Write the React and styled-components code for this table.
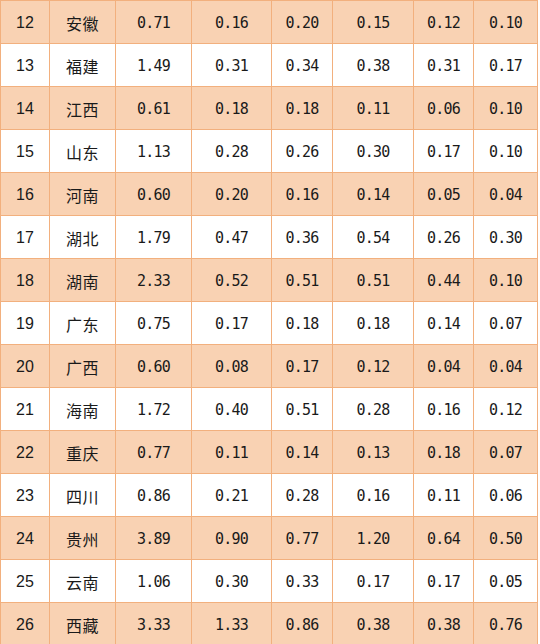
import React from "react"
import styled, { createGlobalStyle } from "styled-components"

const GlobalStyle = createGlobalStyle`
  html, body {
    margin: 0;
    padding: 0;
    background: #ffffff;
  }
`

const rows = [
  ["12", "安徽", "0.71", "0.16", "0.20", "0.15", "0.12", "0.10"],
  ["13", "福建", "1.49", "0.31", "0.34", "0.38", "0.31", "0.17"],
  ["14", "江西", "0.61", "0.18", "0.18", "0.11", "0.06", "0.10"],
  ["15", "山东", "1.13", "0.28", "0.26", "0.30", "0.17", "0.10"],
  ["16", "河南", "0.60", "0.20", "0.16", "0.14", "0.05", "0.04"],
  ["17", "湖北", "1.79", "0.47", "0.36", "0.54", "0.26", "0.30"],
  ["18", "湖南", "2.33", "0.52", "0.51", "0.51", "0.44", "0.10"],
  ["19", "广东", "0.75", "0.17", "0.18", "0.18", "0.14", "0.07"],
  ["20", "广西", "0.60", "0.08", "0.17", "0.12", "0.04", "0.04"],
  ["21", "海南", "1.72", "0.40", "0.51", "0.28", "0.16", "0.12"],
  ["22", "重庆", "0.77", "0.11", "0.14", "0.13", "0.18", "0.07"],
  ["23", "四川", "0.86", "0.21", "0.28", "0.16", "0.11", "0.06"],
  ["24", "贵州", "3.89", "0.90", "0.77", "1.20", "0.64", "0.50"],
  ["25", "云南", "1.06", "0.30", "0.33", "0.17", "0.17", "0.05"],
  ["26", "西藏", "3.33", "1.33", "0.86", "0.38", "0.38", "0.76"],
]

const fonts = {
  index: '"Liberation Sans", Arial, sans-serif',
  name: '"Noto Sans CJK SC", sans-serif',
  value: '"DejaVu Sans Mono", monospace',
}

const Sheet = styled.div`
  display: flex;
  flex-direction: column;
  gap: 1px;
  width: 536px;
  padding: 1px;
  background: #f2b07e;
`

const Row = styled.div`
  display: grid;
  grid-template-columns: 48px 65px 75px 79px 60px 80px 59px 63px;
  column-gap: 1px;
  height: 42px;
`

const Cell = styled.div`
  display: flex;
  align-items: center;
  justify-content: center;
  padding-top: 2px;
  background: ${p => (p.$shade ? "#f9d2b3" : "#ffffff")};
  color: #1a1a1a;
  font-family: ${p => fonts[p.$kind]};
  font-size: ${p => (p.$kind === "value" ? "15px" : "16px")};
  letter-spacing: ${p =>
    p.$kind === "name" ? "0.5px" : p.$kind === "value" ? "-0.8px" : "0"};
`

const kindOf = j => (j === 0 ? "index" : j === 1 ? "name" : "value")

export default function App() {
  return (
    <>
      <GlobalStyle />
      <Sheet>
        {rows.map((row, i) => (
          <Row key={row[0]}>
            {row.map((value, j) => (
              <Cell key={j} $shade={i % 2 === 0} $kind={kindOf(j)}>
                {value}
              </Cell>
            ))}
          </Row>
        ))}
      </Sheet>
    </>
  )
}
